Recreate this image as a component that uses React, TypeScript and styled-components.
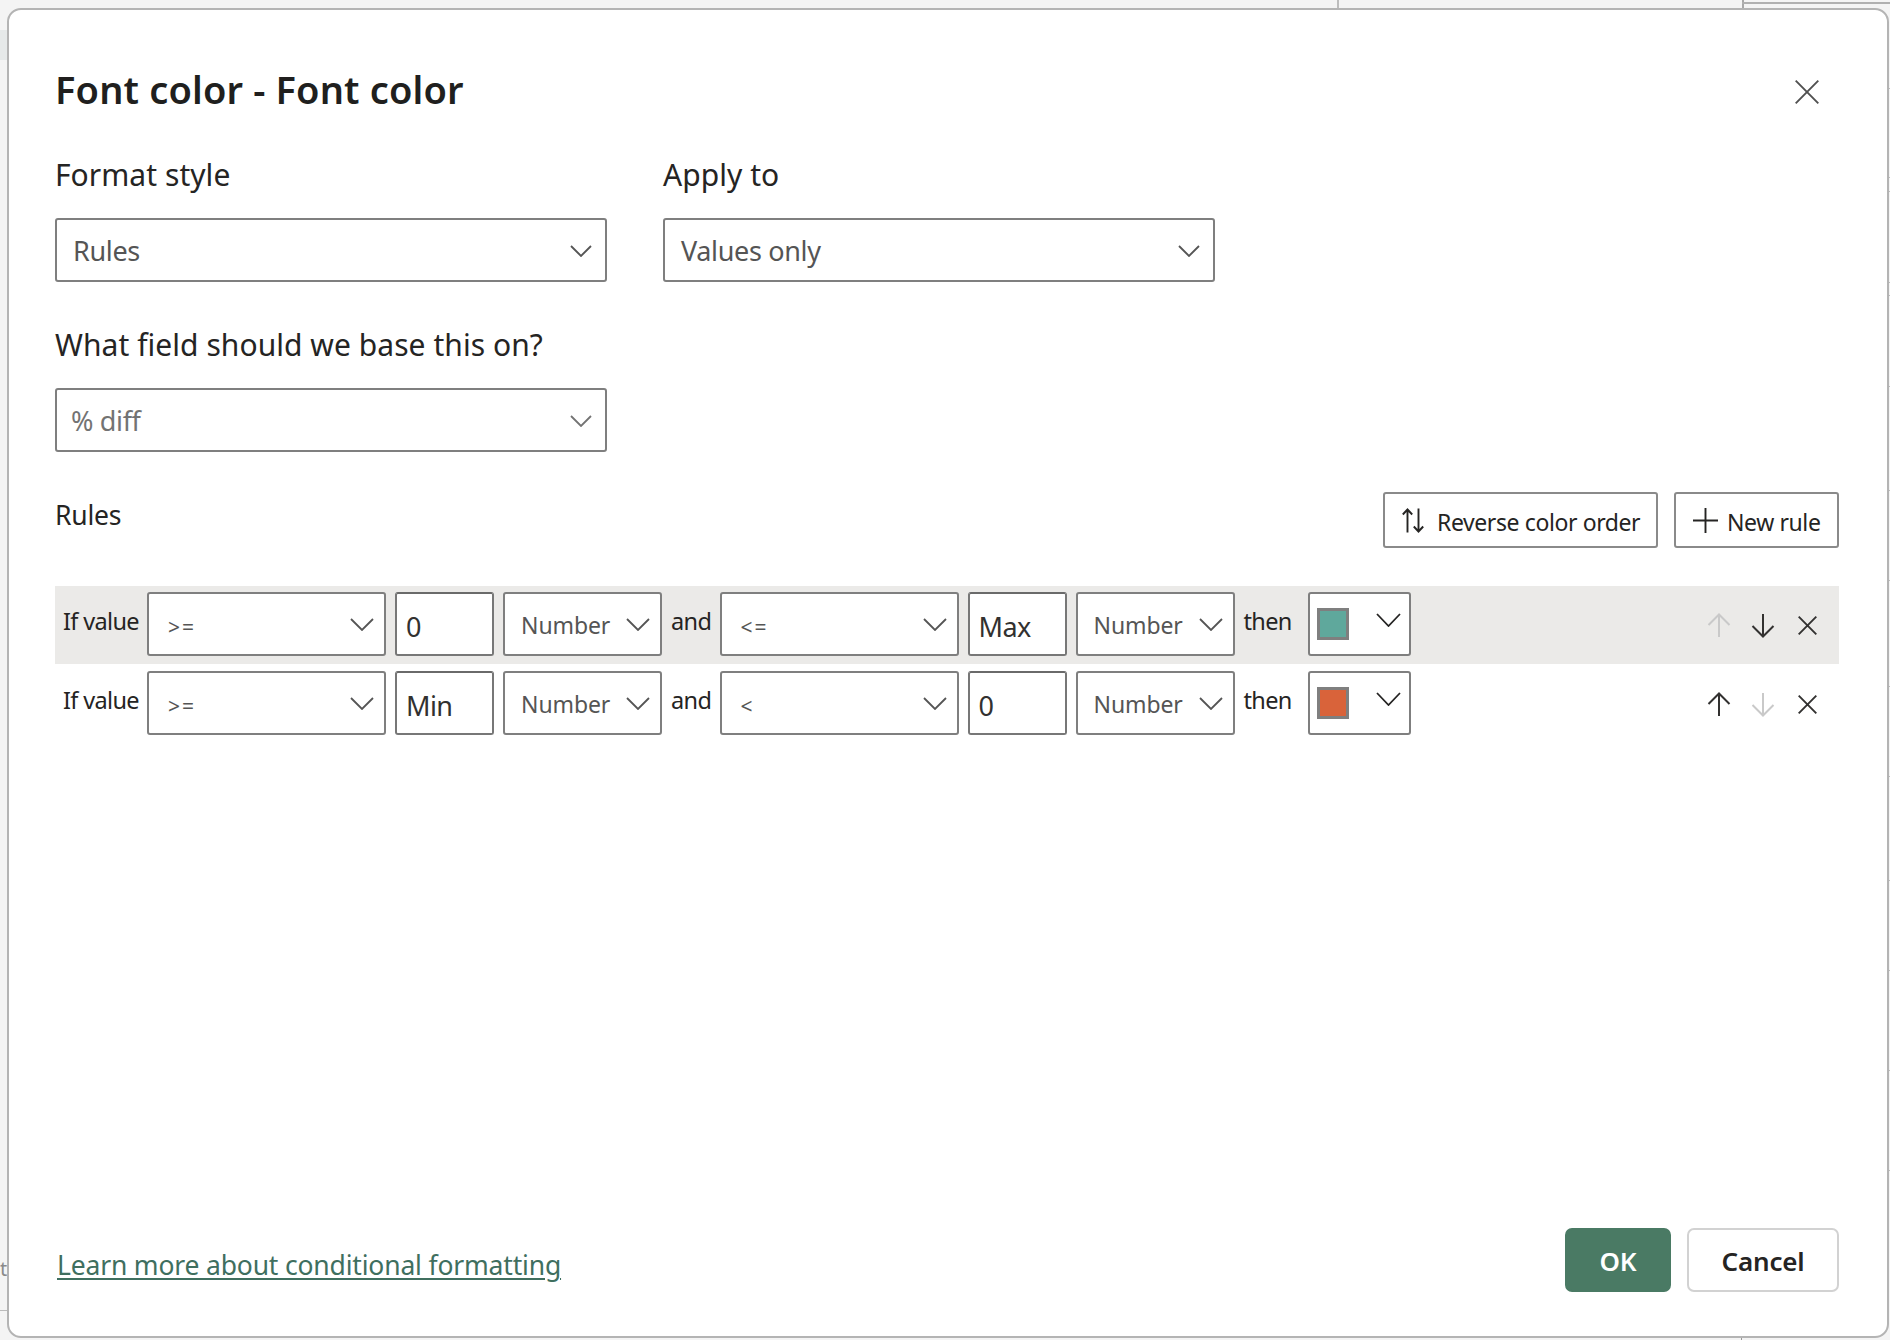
import React from "react";
import styled, { createGlobalStyle } from "styled-components";

const Global = createGlobalStyle`
  html, body { margin: 0; padding: 0; background: #f4f4f4; }
  * { box-sizing: border-box; }
  body { font-family: "Noto Sans", "Open Sans", sans-serif; color: #252423; }
`;

const Page = styled.div`
  position: relative;
  width: 1890px;
  height: 1340px;
  padding: 8px 1px 2px 7px;
  overflow: hidden;
  background: #f4f4f4;
`;
const BackTick = styled.i<{ $x: number; $y: number; $w: number; $h: number; $c: string }>`
  position: absolute;
  left: ${(p) => p.$x}px;
  top: ${(p) => p.$y}px;
  width: ${(p) => p.$w}px;
  height: ${(p) => p.$h}px;
  background: ${(p) => p.$c};
`;
const BackLetter = styled.span`
  position: absolute;
  left: 0;
  top: 1256px;
  font-size: 20px;
  line-height: 26px;
  color: #8a8a8a;
`;
const Dialog = styled.div`
  position: relative;
  display: flex;
  flex-direction: column;
  width: 100%;
  height: 100%;
  padding: 57px 48px 44px 46px;
  background: #fff;
  border: 2px solid #b4b4b4;
  border-radius: 14px;
`;
const Header = styled.div`
  display: flex;
  justify-content: space-between;
  align-items: flex-start;
  height: 44px;
`;
const Title = styled.h1`
  margin: 0;
  font-size: 38px;
  line-height: 44px;
  font-weight: 600;
  letter-spacing: 0.15px;
  color: #201f1e;
`;
const CloseBtn = styled.span`
  display: flex;
  margin: 13px 20px 0 0;
  color: #505050;
`;
const FieldRow = styled.div<{ $first?: boolean }>`
  display: flex;
  gap: 56px;
  margin-top: ${(p) => (p.$first ? 46 : 45)}px;
`;
const Field = styled.div`
  display: flex;
  flex-direction: column;
  gap: 25px;
  width: 552px;
`;
const FieldLabel = styled.label`
  font-size: 30px;
  line-height: 36px;
  letter-spacing: 0.05px;
  color: #252423;
`;
const Select = styled.div<{ $w?: number; $muted?: boolean; $fs?: number; $compact?: boolean }>`
  display: flex;
  align-items: center;
  justify-content: space-between;
  flex: none;
  width: ${(p) => (p.$w ? `${p.$w}px` : "100%")};
  height: 64px;
  padding: 1px ${(p) => (p.$compact ? 10 : 13)}px 0 16px;
  background: #fff;
  border: 2px solid #7f7f7f;
  border-radius: 3px;
  font-size: ${(p) => p.$fs ?? 27}px;
  letter-spacing: ${(p) => (p.$fs ? "-0.1px" : "-0.35px")};
  color: ${(p) => (p.$muted ? "#737373" : "#555")};
`;
const SelectText = styled.span<{ $shift?: number }>`
  margin-left: ${(p) => p.$shift ?? 0}px;
`;
const RulesHead = styled.div`
  display: flex;
  align-items: flex-start;
  margin-top: 40px;
`;
const RulesTitle = styled.div`
  flex: 1;
  font-size: 26.5px;
  line-height: 36px;
  letter-spacing: -0.2px;
  margin-top: 5px;
  color: #252423;
`;
const HeadButton = styled.button<{ $w: number; $gap: number }>`
  display: flex;
  align-items: center;
  gap: ${(p) => p.$gap}px;
  width: ${(p) => p.$w}px;
  height: 56px;
  margin-left: 16px;
  padding: 0 0 0 17px;
  background: #fff;
  border: 2px solid #8a8a8a;
  border-radius: 3px;
  font-family: inherit;
  font-size: 23px;
  letter-spacing: -0.4px;
  white-space: nowrap;
  color: #252423;
`;
const HeadLabel = styled.span`
  padding-top: 3px;
`;
const Rows = styled.div`
  margin-top: 38px;
`;
const RuleRow = styled.div<{ $active?: boolean }>`
  display: flex;
  align-items: flex-start;
  height: 78px;
  padding: ${(p) => (p.$active ? 6 : 7)}px 10px 0 8px;
  background: ${(p) => (p.$active ? "#ebeae8" : "transparent")};
`;
const Word = styled.span<{ $w: number; $pad?: number }>`
  flex: none;
  width: ${(p) => p.$w}px;
  padding-left: ${(p) => p.$pad ?? 0}px;
  font-size: 23.5px;
  line-height: 36px;
  letter-spacing: -0.65px;
  margin-top: 11px;
  color: #252423;
  white-space: nowrap;
`;
const OpText = styled.span`
  margin: 5px 0 0 3px;
  font-size: 21px;
  letter-spacing: 2px;
  color: #555;
`;
const NumInput = styled.div`
  flex: none;
  width: 99px;
  height: 64px;
  margin: 0 9px;
  padding: 5px 0 0 9px;
  display: flex;
  align-items: center;
  background: #fff;
  border: 2px solid #777;
  border-top-color: #6a6a6a;
  border-radius: 3px;
  font-size: 27px;
  letter-spacing: -0.6px;
  color: #323130;
`;
const ColorSelect = styled.div`
  display: flex;
  align-items: flex-start;
  justify-content: space-between;
  flex: none;
  width: 103px;
  height: 64px;
  padding: 14px 8px 0 7px;
  background: #fff;
  border: 2px solid #7f7f7f;
  border-radius: 3px;
  color: #252423;
`;
const Swatch = styled.span<{ $c: string }>`
  display: block;
  width: 32px;
  height: 32px;
  background: ${(p) => p.$c};
  border: 3px solid #7f7f7f;
`;
const ColorChevron = styled.span`
  display: flex;
  margin-top: 5px;
`;
const Actions = styled.div`
  display: flex;
  margin-left: auto;
`;
const ActionIcon = styled.span<{ $off?: boolean }>`
  display: flex;
  align-items: center;
  justify-content: center;
  width: 44px;
  height: 63px;
  padding-top: 3px;
  color: ${(p) => (p.$off ? "#c9c9c9" : "#323130")};
`;
const Footer = styled.div`
  display: flex;
  align-items: flex-end;
  margin-top: auto;
`;
const Link = styled.a`
  margin: 0 auto 9px 2px;
  font-size: 26.5px;
  line-height: 36px;
  letter-spacing: -0.18px;
  color: #3f6f5f;
  text-decoration: underline;
  text-decoration-thickness: 2px;
  text-underline-offset: 3px;
`;
const DialogButton = styled.button<{ $primary?: boolean }>`
  width: ${(p) => (p.$primary ? 106 : 152)}px;
  height: 64px;
  margin-left: 16px;
  padding: 1px 0 0;
  font-family: inherit;
  font-size: 26px;
  font-weight: 600;
  letter-spacing: -0.2px;
  color: ${(p) => (p.$primary ? "#fff" : "#252423")};
  background: ${(p) => (p.$primary ? "#4a7a64" : "#fff")};
  border: 2px solid ${(p) => (p.$primary ? "#4a7a64" : "#d2d2d2")};
  border-radius: 7px;
`;

const Chevron = ({ w = 24, h = 13 }: { w?: number; h?: number }) => (
  <svg width={w} height={h} viewBox={`0 0 ${w} ${h}`} fill="none" stroke="currentColor" strokeWidth="1.8">
    <path d={`M1 1 L${w / 2} ${h - 1} L${w - 1} 1`} />
  </svg>
);
const ArrowUp = () => (
  <svg width="24" height="25" viewBox="0 0 24 25" fill="none" stroke="currentColor" strokeWidth="2">
    <path d="M12 24 V1.5 M1.5 12 L12 1.5 L22.5 12" />
  </svg>
);
const ArrowDown = () => (
  <svg width="24" height="25" viewBox="0 0 24 25" fill="none" stroke="currentColor" strokeWidth="2">
    <path d="M12 1 V23.5 M1.5 13 L12 23.5 L22.5 13" />
  </svg>
);
const Cross = ({ s = 19 }: { s?: number }) => (
  <svg width={s} height={s} viewBox={`0 0 ${s} ${s}`} fill="none" stroke="currentColor" strokeWidth="1.9">
    <path d={`M0.7 0.7 L${s - 0.7} ${s - 0.7} M${s - 0.7} 0.7 L0.7 ${s - 0.7}`} />
  </svg>
);
const SwapIcon = () => (
  <svg width="22" height="25" viewBox="0 0 22 25" fill="none" stroke="currentColor" strokeWidth="1.9">
    <path d="M5.5 24.5 V1.5 M0.8 6.5 L5.5 1.5 L10.2 6.5 M16.5 0.5 V23.5 M11.8 18.5 L16.5 23.5 L21.2 18.5" />
  </svg>
);
const PlusIcon = () => (
  <svg width="25" height="25" viewBox="0 0 25 25" fill="none" stroke="currentColor" strokeWidth="1.9">
    <path d="M12.5 0 V25 M0 12.5 H25" />
  </svg>
);

const ticks = [88, 177, 191, 282, 295, 386, 490, 580, 686, 776, 880, 970, 1070, 1170];

type RuleProps = {
  active?: boolean;
  op1: string;
  v1: string;
  op2: string;
  v2: string;
  color: string;
  upOff?: boolean;
  downOff?: boolean;
};

const Rule = ({ active, op1, v1, op2, v2, color, upOff, downOff }: RuleProps) => (
  <RuleRow $active={active}>
    <Word $w={84}>If value</Word>
    <Select $w={239} $compact>
      <OpText>{op1}</OpText>
      <Chevron />
    </Select>
    <NumInput>{v1}</NumInput>
    <Select $w={159} $fs={23} $compact>
      Number
      <Chevron />
    </Select>
    <Word $w={57.5} $pad={9}>and</Word>
    <Select $w={239} $compact>
      <OpText>{op2}</OpText>
      <Chevron />
    </Select>
    <NumInput>{v2}</NumInput>
    <Select $w={159} $fs={23} $compact>
      Number
      <Chevron />
    </Select>
    <Word $w={73.5} $pad={9}>then</Word>
    <ColorSelect>
      <Swatch $c={color} />
      <ColorChevron><Chevron w={25} h={14} /></ColorChevron>
    </ColorSelect>
    <Actions>
      <ActionIcon $off={upOff}><ArrowUp /></ActionIcon>
      <ActionIcon $off={downOff}><ArrowDown /></ActionIcon>
      <ActionIcon><Cross /></ActionIcon>
    </Actions>
  </RuleRow>
);

export default function App() {
  return (
    <Page>
      <Global />
      <BackTick $x={1337} $y={0} $w={2} $h={8} $c="#bdbdbd" />
      <BackTick $x={1742} $y={0} $w={2} $h={8} $c="#a8a8a8" />
      <BackTick $x={1742} $y={2} $w={148} $h={2} $c="#b0b0b0" />
      <BackTick $x={0} $y={30} $w={7} $h={30} $c="#e6e9e9" />
      <BackTick $x={0} $y={1310} $w={7} $h={1} $c="#bbb" />
      <BackTick $x={1741} $y={1338} $w={1} $h={2} $c="#999" />
      {ticks.map((y) => (
        <BackTick key={y} $x={1888} $y={y} $w={2} $h={1} $c="#bdbdbd" />
      ))}
      <BackLetter>t</BackLetter>
      <Dialog>
        <Header>
          <Title>Font color - Font color</Title>
          <CloseBtn><Cross s={24} /></CloseBtn>
        </Header>
        <FieldRow $first>
          <Field>
            <FieldLabel>Format style</FieldLabel>
            <Select>Rules<Chevron w={22} h={12} /></Select>
          </Field>
          <Field>
            <FieldLabel>Apply to</FieldLabel>
            <Select>Values only<Chevron w={22} h={12} /></Select>
          </Field>
        </FieldRow>
        <FieldRow>
          <Field>
            <FieldLabel>What field should we base this on?</FieldLabel>
            <Select $muted><SelectText $shift={-2}>% diff</SelectText><Chevron w={22} h={12} /></Select>
          </Field>
        </FieldRow>
        <RulesHead>
          <RulesTitle>Rules</RulesTitle>
          <HeadButton $w={275} $gap={13}><SwapIcon /><HeadLabel>Reverse color order</HeadLabel></HeadButton>
          <HeadButton $w={165} $gap={9}><PlusIcon /><HeadLabel>New rule</HeadLabel></HeadButton>
        </RulesHead>
        <Rows>
          <Rule active op1=">=" v1="0" op2="<=" v2="Max" color="#5fa89c" upOff />
          <Rule op1=">=" v1="Min" op2="<" v2="0" color="#d9633a" downOff />
        </Rows>
        <Footer>
          <Link>Learn more about conditional formatting</Link>
          <DialogButton $primary>OK</DialogButton>
          <DialogButton>Cancel</DialogButton>
        </Footer>
      </Dialog>
    </Page>
  );
}
